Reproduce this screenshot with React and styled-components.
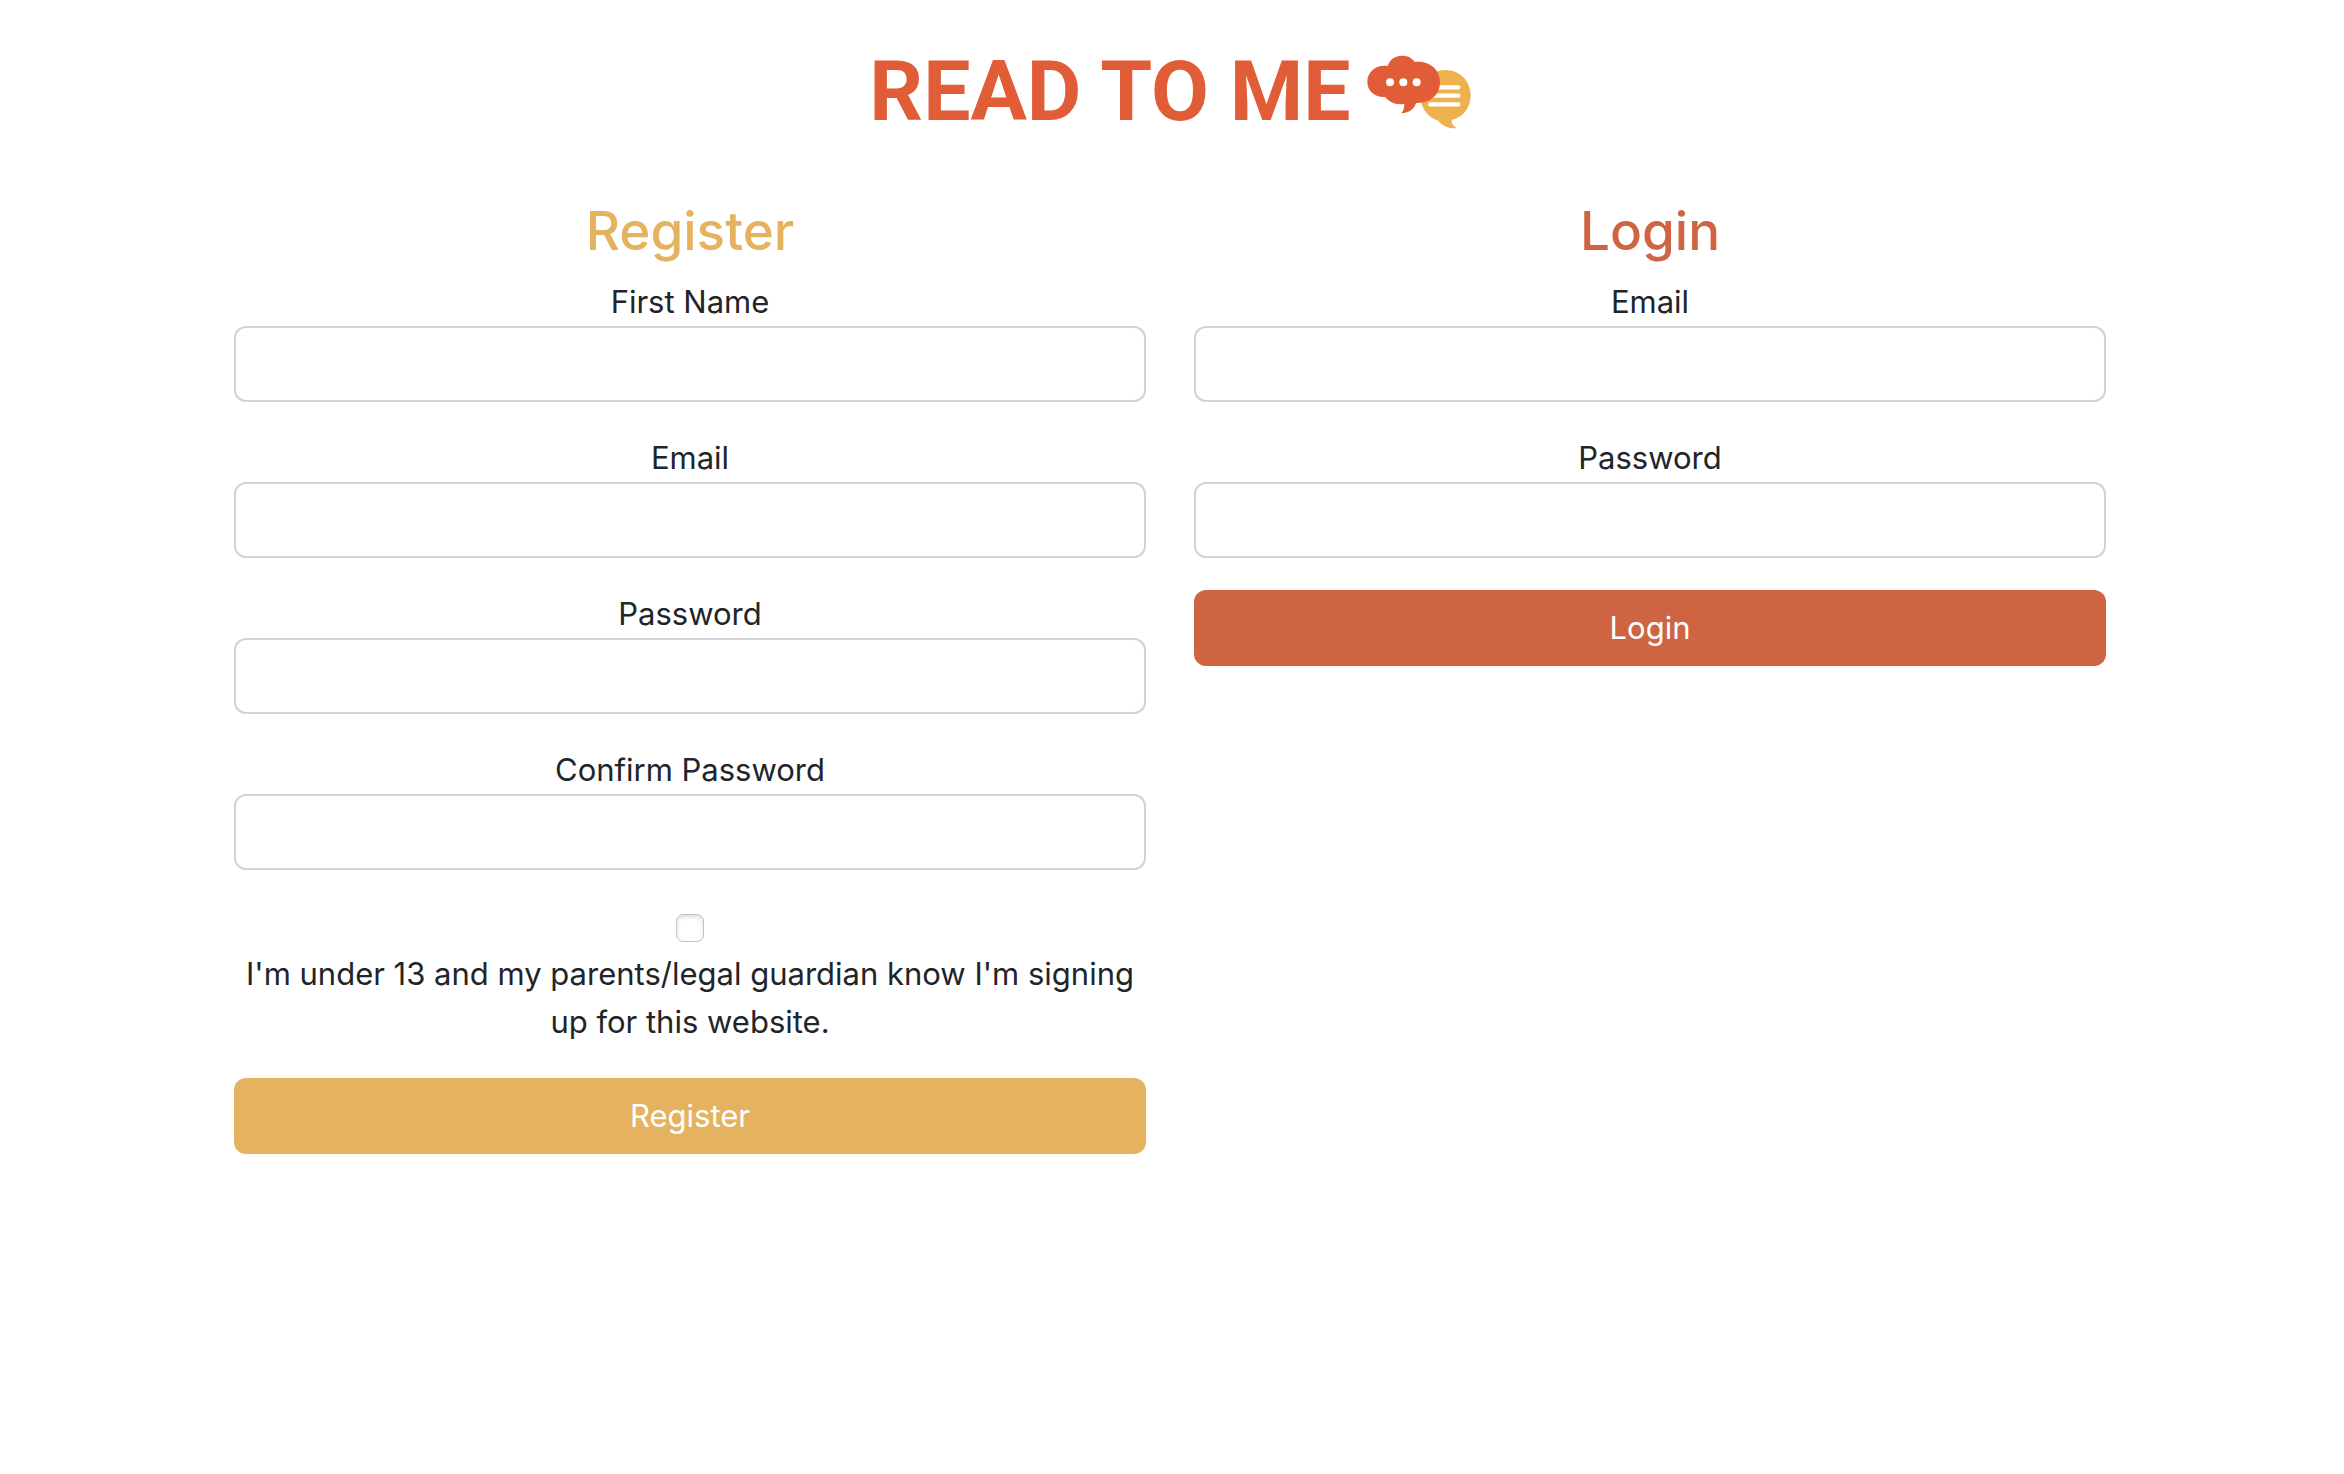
import React from "react";
import styled, { createGlobalStyle } from "styled-components";

const GlobalStyle = createGlobalStyle`
  *, *::before, *::after { box-sizing: border-box; }
  body {
    margin: 0;
    background: #fff;
    color: #212529;
    font-family: Inter, "Liberation Sans", sans-serif;
    font-size: 31px;
    line-height: 48px;
  }
`;

const Page = styled.div`
  padding-right: 4px;
`;

const Header = styled.header`
  display: flex;
  justify-content: center;
  align-items: center;
  gap: 16px;
  padding: 44px 0 56px;
`;

const Brand = styled.h1`
  margin: 0;
  color: #e05d37;
  font-family: Roboto, "Liberation Sans", sans-serif;
  font-size: 84px;
  font-weight: 700;
  line-height: 96px;
`;

const BubblesIcon = styled.svg`
  display: block;
  width: 104px;
  height: 74px;
  flex: none;
`;

const Columns = styled.main`
  display: grid;
  grid-template-columns: repeat(auto-fit, minmax(min(100%, 480px), 1fr));
  gap: 48px;
  max-width: 1920px;
  margin: 0 auto;
  padding: 0 24px;
  align-items: start;
  text-align: center;
`;

const Title = styled.h2`
  margin: 0 0 12px;
  color: ${({ $tone }) => $tone};
  font-size: 53px;
  font-weight: 500;
  line-height: 70px;
`;

const Field = styled.div`
  margin-bottom: 32px;
`;

const Label = styled.label`
  display: block;
`;

const Input = styled.input`
  display: block;
  width: 100%;
  height: 76px;
  padding: 12px 24px;
  border: 2px solid #ced4da;
  border-radius: 12px;
  background: #fff;
  color: inherit;
  font: inherit;
`;

const CheckRow = styled.div`
  display: flex;
  justify-content: center;
  align-items: center;
  height: 48px;
`;

const Checkbox = styled.input`
  appearance: none;
  width: 28px;
  height: 28px;
  margin: 4px 0 0;
  border: 1px solid #c2c2c2;
  border-radius: 7px;
  background: #fff;
  box-shadow: inset 0 2px 4px rgba(0, 0, 0, 0.14);
  &:checked { background: #e5b25f; }
`;

const Button = styled.button`
  display: block;
  width: 100%;
  height: 76px;
  padding: 12px 24px;
  border: 0;
  border-radius: 12px;
  background: ${({ $tone }) => $tone};
  color: #fff;
  font: inherit;
  cursor: pointer;
`;

const GOLD = "#e5b25f";
const RUST = "#cf6442";

const registerFields = [
  { id: "register-name", label: "First Name", type: "text" },
  { id: "register-email", label: "Email", type: "email" },
  { id: "register-password", label: "Password", type: "password" },
  { id: "register-confirm", label: "Confirm Password", type: "password" },
];

const loginFields = [
  { id: "login-email", label: "Email", type: "email" },
  { id: "login-password", label: "Password", type: "password" },
];

function Bubbles() {
  return (
    <BubblesIcon viewBox="48 42 312 222" aria-hidden="true">
      <path
        fill="#efb04e"
        d="M284 87C326 87 359 120 359 163C359 200 336 229 303 237C299 245 306 255 317 261C294 265 275 253 261 239C229 229 208 199 208 163C208 120 242 87 284 87Z"
      />
      <path
        stroke="#fff"
        strokeWidth="13"
        strokeLinecap="round"
        d="M238 139H322M238 164H322M238 190H322"
      />
      <path
        fill="#e05d37"
        d="M110 75C117 54 133 44 153 44C170 44 183 50 191 63C236 57 267 87 267 124C267 160 239 188 195 186C190 203 175 216 151 217C158 209 160 199 160 188C138 193 116 186 103 168C72 170 49 150 49 122C49 92 76 69 110 75Z"
      />
      <g fill="#fff">
        <circle cx="117" cy="124" r="12" />
        <circle cx="157" cy="124" r="12" />
        <circle cx="197" cy="124" r="12" />
      </g>
    </BubblesIcon>
  );
}

function Fields({ items }) {
  return items.map(({ id, label, type }) => (
    <Field key={id}>
      <Label htmlFor={id}>{label}</Label>
      <Input id={id} name={id} type={type} />
    </Field>
  ));
}

export default function App() {
  return (
    <Page>
      <GlobalStyle />
      <Header>
        <Brand>READ TO ME</Brand>
        <Bubbles />
      </Header>
      <Columns>
        <form onSubmit={(e) => e.preventDefault()}>
          <Title $tone={GOLD}>Register</Title>
          <Fields items={registerFields} />
          <Field>
            <CheckRow>
              <Checkbox id="guardian" type="checkbox" />
            </CheckRow>
            <Label htmlFor="guardian">
              I'm under 13 and my parents/legal guardian know I'm signing up for this website.
            </Label>
          </Field>
          <Button type="submit" $tone={GOLD}>Register</Button>
        </form>
        <form onSubmit={(e) => e.preventDefault()}>
          <Title $tone={RUST}>Login</Title>
          <Fields items={loginFields} />
          <Button type="submit" $tone={RUST}>Login</Button>
        </form>
      </Columns>
    </Page>
  );
}
